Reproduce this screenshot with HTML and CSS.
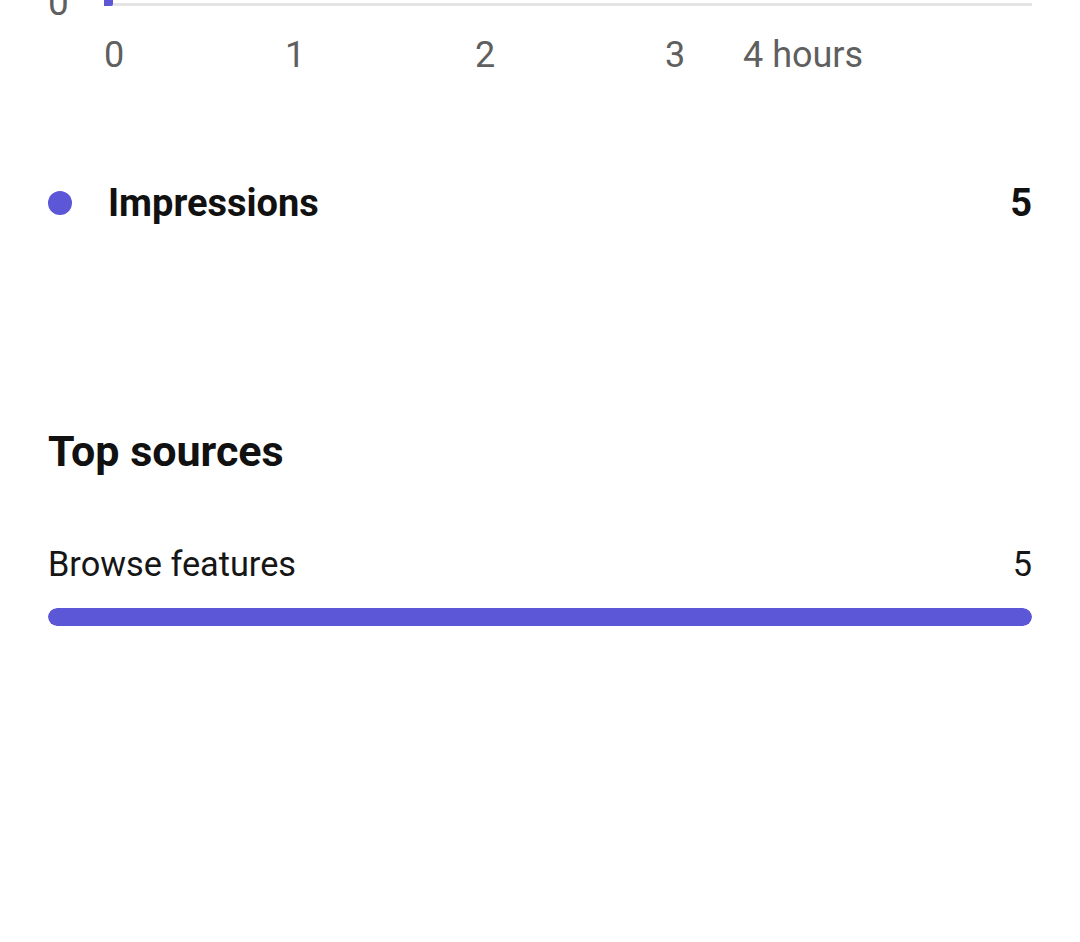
FILE: index.html
```html
<!DOCTYPE html>
<html lang="en">
<head>
<meta charset="utf-8">
<title>Impressions</title>
<link rel="stylesheet" href="styles.css">
</head>
<body>
<main class="page">
  <section class="chart">
    <div class="plot-row">
      <div class="y-label">0</div>
      <div class="plot">
        <div class="gridline"></div>
        <div class="series-point"></div>
      </div>
    </div>
    <div class="x-axis">
      <span class="x-label" style="left: 56px">0</span>
      <span class="x-label" style="left: 237px">1</span>
      <span class="x-label" style="left: 427px">2</span>
      <span class="x-label" style="left: 617px">3</span>
      <span class="x-label" style="left: 695px">4 hours</span>
    </div>
  </section>

  <div class="legend">
    <span class="legend-dot"></span>
    <span class="legend-name">Impressions</span>
    <span class="legend-value">5</span>
  </div>

  <h2 class="section-title">Top sources</h2>

  <div class="source">
    <div class="source-row">
      <span class="source-name">Browse features</span>
      <span class="source-value">5</span>
    </div>
    <div class="source-bar"><div class="source-fill" style="width: 100%"></div></div>
  </div>
</main>
</body>
</html>
```
FILE: styles.css
```css
html, body {
  margin: 0;
  padding: 0;
  background: #ffffff;
}

body {
  font-family: Roboto, "Noto Sans", "Liberation Sans", sans-serif;
  color: #121212;
  width: 1080px;
  height: 942px;
  overflow: hidden;
}

.page {
  padding: 0 48px;
}

.chart {
  display: flex;
  flex-direction: column;
}

.plot-row {
  display: flex;
  height: 37px;
}

.y-label {
  width: 56px;
  font-size: 37px;
  line-height: 37px;
  margin-top: -16px;
  color: #5f5f5f;
}

.plot {
  flex: 1;
  position: relative;
}

.gridline {
  margin-top: 3px;
  height: 3px;
  background: #e4e4e4;
}

.series-point {
  position: absolute;
  left: 0;
  top: 0;
  width: 9px;
  height: 6px;
  background: #5b57d6;
  border-radius: 0 0 2px 0;
}

.x-axis {
  position: relative;
  height: 37px;
}

.x-label {
  position: absolute;
  top: 0;
  font-size: 36px;
  line-height: 37px;
  color: #5f5f5f;
  white-space: nowrap;
}

.legend {
  display: flex;
  align-items: center;
  margin-top: 110px;
  height: 38px;
}

.legend-dot {
  width: 24px;
  height: 24px;
  border-radius: 50%;
  background: #5b57d6;
  margin-right: 36px;
}

.legend-name,
.legend-value {
  font-size: 38px;
  line-height: 38px;
  font-weight: 700;
  color: #111111;
}

.legend-value {
  margin-left: auto;
}

.section-title {
  margin: 208px 0 0;
  font-size: 43px;
  line-height: 42px;
  font-weight: 700;
  color: #111111;
}

.source {
  margin-top: 75px;
}

.source-row {
  display: flex;
  justify-content: space-between;
  font-size: 34.3px;
  line-height: 34px;
  color: #161616;
}

.source-bar {
  margin-top: 27px;
  height: 18px;
  border-radius: 9px;
  background: #e8e8f4;
  overflow: hidden;
}

.source-fill {
  height: 100%;
  border-radius: 9px;
  background: #5b57d6;
}
```
